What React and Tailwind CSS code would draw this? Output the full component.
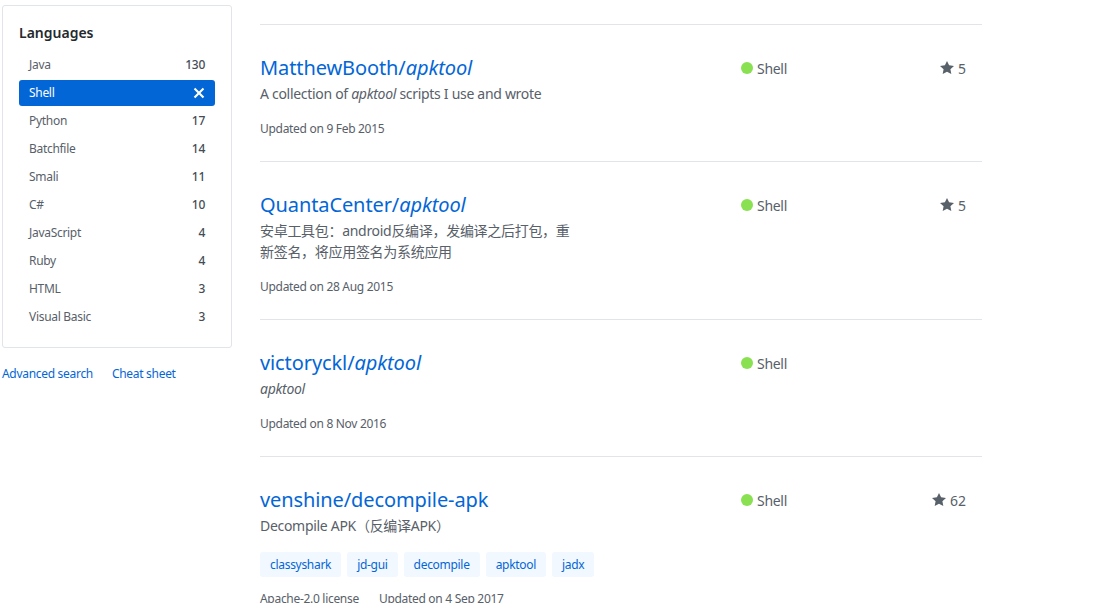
import React from 'react';

const font = { fontFamily: '"Noto Sans", "Noto Sans CJK SC", sans-serif' };

const languages = [
  { name: 'Java', count: 130 },
  { name: 'Shell', count: null, selected: true },
  { name: 'Python', count: 17 },
  { name: 'Batchfile', count: 14 },
  { name: 'Smali', count: 11 },
  { name: 'C#', count: 10 },
  { name: 'JavaScript', count: 4 },
  { name: 'Ruby', count: 4 },
  { name: 'HTML', count: 3 },
  { name: 'Visual Basic', count: 3 },
];

const StarIcon = () => (
  <svg width="14" height="16" viewBox="0 0 14 16" className="fill-[#586069]">
    <path d="M14 6l-4.9-.64L7 1 4.9 5.36 0 6l3.6 3.26L2.67 14 7 11.67 11.33 14l-.93-4.74L14 6z" />
  </svg>
);

const XIcon = () => (
  <svg width="12" height="16" viewBox="0 0 12 16" className="fill-white">
    <path d="M7.48 8l3.75 3.75-1.48 1.48L6 9.48l-3.75 3.75-1.48-1.48L4.52 8 .77 4.25l1.48-1.48L6 6.52l3.75-3.75 1.48 1.48L7.48 8z" />
  </svg>
);

const Sidebar = () => (
  <div className="w-[230px] ml-[2px] mt-[5px] shrink-0">
    <div className="border border-[#e1e4e8] rounded-[3px] px-4 pt-4 pb-[17px]">
      <h2 className="text-[14px] leading-[21px] font-semibold text-[#24292e] mb-[9px]">Languages</h2>
      <ul>
        {languages.map((lang) => (
          <li
            key={lang.name}
            className={`h-[26px] mb-[2px] last:mb-0 px-[10px] flex items-center justify-between text-[12px] tracking-[-0.3px] rounded-[3px] ${
              lang.selected ? 'bg-[#0366d6] text-white' : 'text-[#586069]'
            }`}
          >
            <span>{lang.name}</span>
            {lang.selected ? (
              <XIcon />
            ) : (
              <span className="font-medium text-[#444d56]">{lang.count}</span>
            )}
          </li>
        ))}
      </ul>
    </div>
    <div className="mt-[17px] flex gap-[19px] text-[12px] leading-[18px] tracking-[-0.3px] text-[#0366d6]">
      <a>Advanced search</a>
      <a>Cheat sheet</a>
    </div>
  </div>
);

const RepoItem = ({ owner, name, desc, updated, stars, topics, license }) => (
  <div className="border-t border-[#e1e4e8] pt-[28px] pb-[23px] flex">
    <div className="w-[481px]">
      <h3 className="text-[20px] leading-[30px] tracking-[-0.1px] text-[#0366d6]">
        {owner}/{name}
      </h3>
      <p className="text-[14px] leading-[21px] tracking-[-0.3px] text-[#586069] w-[318px]">{desc}</p>
      {topics && (
        <div className="mt-[16px] flex gap-[6px]">
          {topics.map((t) => (
            <span key={t} className="h-[25px] px-[10px] flex items-center rounded-[3px] bg-[#f1f8ff] text-[12px] tracking-[-0.3px] text-[#0366d6]">
              {t}
            </span>
          ))}
        </div>
      )}
      <p className={`${topics ? 'mt-[13px]' : 'mt-4'} text-[12px] leading-[18px] tracking-[-0.3px] text-[#586069] flex`}>
        {license && <span className="mr-[20px]">{license}</span>}
        <span>Updated on {updated}</span>
      </p>
    </div>
    <div className="w-[120px] h-[30px] flex items-center text-[14px] tracking-[-0.3px] text-[#586069]">
      <span className="w-3 h-3 rounded-full bg-[#89e051] mr-1" />
      Shell
    </div>
    <div className="w-[121px] h-[30px] flex items-center justify-end pr-4 text-[14px] text-[#586069]">
      {stars && (
        <>
          <StarIcon />
          <span className="ml-1">{stars}</span>
        </>
      )}
    </div>
  </div>
);

export default function App() {
  return (
    <div className="w-[1120px] h-[603px] overflow-hidden bg-white flex" style={font}>
      <Sidebar />
      <div className="ml-[28px] mt-[24px] w-[722px]">
        <RepoItem
          owner="MatthewBooth"
          name={<em>apktool</em>}
          desc={<>A collection of <em>apktool</em> scripts I use and wrote</>}
          updated="9 Feb 2015"
          stars="5"
        />
        <RepoItem
          owner="QuantaCenter"
          name={<em>apktool</em>}
          desc="安卓工具包：android反编译，发编译之后打包，重新签名，将应用签名为系统应用"
          updated="28 Aug 2015"
          stars="5"
        />
        <RepoItem
          owner="victoryckl"
          name={<em>apktool</em>}
          desc={<em>apktool</em>}
          updated="8 Nov 2016"
        />
        <RepoItem
          owner="venshine"
          name="decompile-apk"
          desc="Decompile APK（反编译APK）"
          updated="4 Sep 2017"
          stars="62"
          topics={['classyshark', 'jd-gui', 'decompile', 'apktool', 'jadx']}
          license="Apache-2.0 license"
        />
      </div>
    </div>
  );
}
